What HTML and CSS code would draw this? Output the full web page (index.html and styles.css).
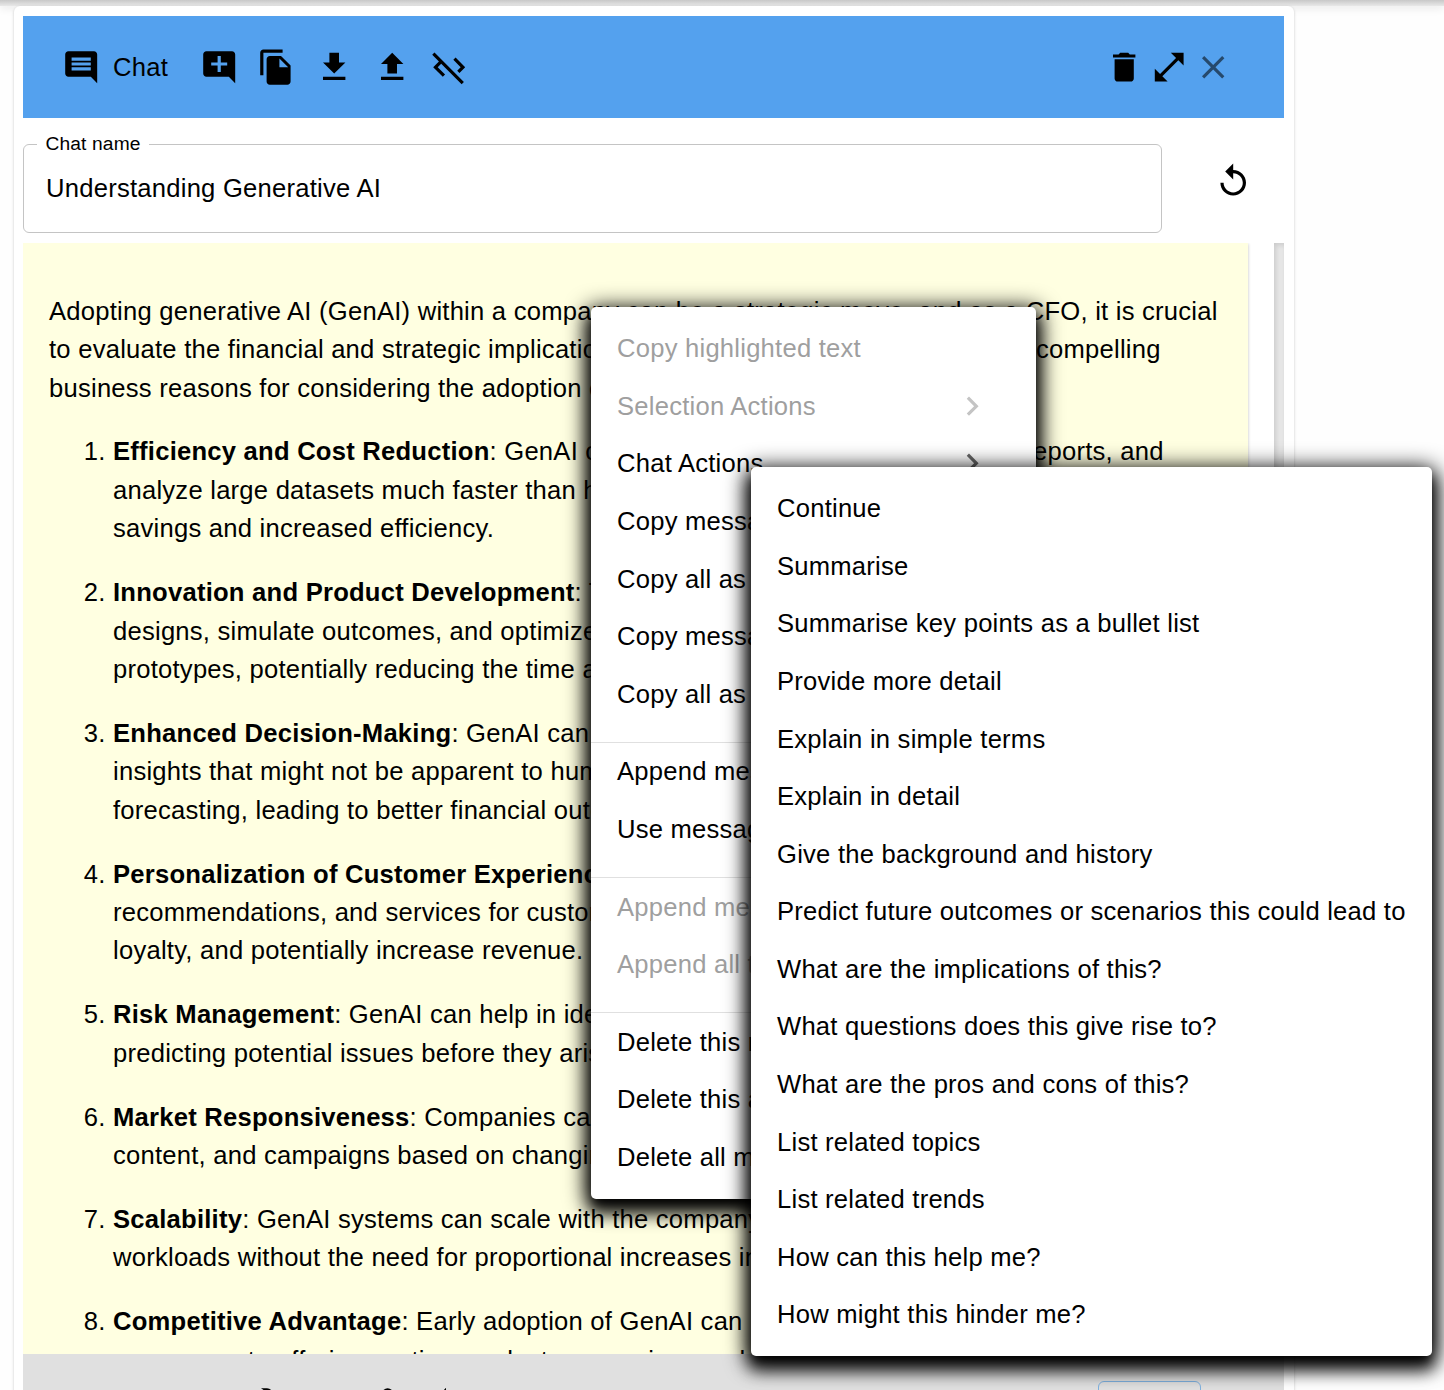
FILE: index.html
```
<!DOCTYPE html>
<html lang="en">
<head>
<meta charset="utf-8">
<title>Chat</title>
<link rel="stylesheet" href="styles.css">
</head>
<body>
<div class="app-bar"></div>
<main class="card">
  <header class="toolbar">
    <svg class="icon" viewBox="0 0 24 24"><path d="M21.99 4c0-1.1-.89-2-1.99-2H4c-1.1 0-2 .9-2 2v12c0 1.1.9 2 2 2h14l4 4-.01-18zM18 14H6v-2h12v2zm0-3H6V9h12v2zm0-3H6V6h12v2z"/></svg>
    <span class="title">Chat</span>
    <svg class="icon new" viewBox="0 0 24 24"><path d="M22 4c0-1.1-.9-2-2-2H4c-1.1 0-2 .9-2 2v12c0 1.1.9 2 2 2h14l4 4V4zm-5 7h-4v4h-2v-4H7V9h4V5h2v4h4v2z"/></svg>
    <svg class="icon copy" viewBox="0 0 24 24"><path d="M16 1H4c-1.1 0-2 .9-2 2v14h2V3h12V1zm-1 4 6 6v10c0 1.1-.9 2-2 2H7.99C6.89 23 6 22.1 6 21l.01-14c0-1.1.89-2 1.99-2h7zm-1 7h5.5L14 6.5V12z"/></svg>
    <svg class="icon down" viewBox="0 0 24 24"><path d="M19 9h-4V3H9v6H5l7 7 7-7zM5 18v2h14v-2H5z"/></svg>
    <svg class="icon up" viewBox="0 0 24 24"><path d="M5 20h14v-2H5v2zm0-10h4v6h6v-6h4l-7-7-7 7z"/></svg>
    <svg class="icon code" viewBox="0 0 24 24"><path d="m19.17 12-4.58-4.59L16 6l6 6-3.59 3.59L17 14.17 19.17 12zM1.39 4.22l4.19 4.19L2 12l6 6 1.41-1.41L4.83 12 7 9.83l12.78 12.78 1.41-1.41L2.81 2.81 1.39 4.22z"/></svg>
    <span class="grow"></span>
    <svg class="icon trash" viewBox="0 0 24 24"><path d="M6 19c0 1.1.9 2 2 2h8c1.1 0 2-.9 2-2V7H6v12zM19 4h-3.5l-1-1h-5l-1 1H5v2h14V4z"/></svg>
    <svg class="icon expand" viewBox="0 0 24 24"><path d="M21 11V3h-8l3.29 3.29-10 10L3 13v8h8l-3.29-3.29 10-10z"/></svg>
    <svg class="icon close" viewBox="0 0 24 24"><path d="M19 6.41 17.59 5 12 10.59 6.41 5 5 6.41 10.59 12 5 17.59 6.41 19 12 13.41 17.59 19 19 17.59 13.41 12z"/></svg>
  </header>

  <div class="name-row">
    <fieldset class="field"><legend>Chat name</legend><span>Understanding Generative AI</span></fieldset>
    <svg class="icon reset" viewBox="0 0 24 24"><path d="M12 5V1L7 6l5 5V7c3.31 0 6 2.69 6 6s-2.69 6-6 6-6-2.69-6-6H4c0 4.42 3.58 8 8 8s8-3.58 8-8-3.58-8-8-8z"/></svg>
  </div>

  <div class="scroller">
    <article class="message">
      <p>Adopting generative AI (GenAI) within a company can be a strategic move, and as a CFO, it is crucial<br>to evaluate the financial and strategic implications <span class="end" style="--x:1013px">compelling</span><br>business reasons for considering the adoption of</p>
      <ol>
        <li><b>Efficiency and Cost Reduction</b>: GenAI can <span class="end" style="--x:1010px">eports, and</span><br>analyze large datasets much faster than hu<br>savings and increased efficiency.</li>
        <li><b>Innovation and Product Development</b>: The<br>designs, simulate outcomes, and optimize<br>prototypes, potentially reducing the time and</li>
        <li><b>Enhanced Decision-Making</b>: GenAI can<br>insights that might not be apparent to human<br>forecasting, leading to better financial outcomes</li>
        <li><b>Personalization of Customer Experience</b><br>recommendations, and services for customers<br>loyalty, and potentially increase revenue.</li>
        <li><b>Risk Management</b>: GenAI can help in identify<br>predicting potential issues before they arise.</li>
        <li><b>Market Responsiveness</b>: Companies can<br>content, and campaigns based on changing</li>
        <li><b>Scalability</b>: GenAI systems can scale with the company<br>workloads without the need for proportional increases in</li>
        <li><b>Competitive Advantage</b>: Early adoption of GenAI can<br>ease move to offering section products or services and</li>
      </ol>
    </article>
    <div class="track"></div>
  </div>

  <footer class="composer">
    <svg class="tools" viewBox="0 0 200 20"><path d="M1 1.200H7Q10 1.200 12 4H5zM121.500 5Q127.500-2.500 134 5zM183 4l3-3.200V4z"/></svg>
    <span class="send"></span>
  </footer>
</main>

<ul class="menu main-menu">
  <li class="off">Copy highlighted text</li>
  <li class="off">Selection Actions<svg class="chevron" viewBox="0 0 24 24"><path d="M10 6 8.59 7.41 13.17 12l-4.58 4.59L10 18l6-6z"/></svg></li>
  <li>Chat Actions<svg class="chevron" viewBox="0 0 24 24"><path d="M10 6 8.59 7.41 13.17 12l-4.58 4.59L10 18l6-6z"/></svg></li>
  <li>Copy message</li>
  <li>Copy all as</li>
  <li>Copy message</li>
  <li>Copy all as</li>
  <li class="divider"></li>
  <li>Append message</li>
  <li>Use message</li>
  <li class="divider"></li>
  <li class="off">Append message</li>
  <li class="off">Append all to</li>
  <li class="divider"></li>
  <li>Delete this message</li>
  <li>Delete this and</li>
  <li>Delete all messages</li>
</ul>

<ul class="menu sub-menu">
  <li>Continue</li>
  <li>Summarise</li>
  <li>Summarise key points as a bullet list</li>
  <li>Provide more detail</li>
  <li>Explain in simple terms</li>
  <li>Explain in detail</li>
  <li>Give the background and history</li>
  <li>Predict future outcomes or scenarios this could lead to</li>
  <li>What are the implications of this?</li>
  <li>What questions does this give rise to?</li>
  <li>What are the pros and cons of this?</li>
  <li>List related topics</li>
  <li>List related trends</li>
  <li>How can this help me?</li>
  <li>How might this hinder me?</li>
</ul>
</body>
</html>
```
FILE: styles.css
```
* { box-sizing: border-box; }
html, body { height: 1390px; }
body {
  margin: 0;
  position: relative;
  overflow: hidden;
  background: #fefefe;
  color: #000;
  font: 25.6px/38.4px "Liberation Sans", Arial, sans-serif;
  letter-spacing: 0.24px;
}
.app-bar {
  height: 6px;
  background: linear-gradient(#c8c8c8, #e8e8e8);
  box-shadow: 0 2px 8px rgba(0, 0, 0, .1);
}
.card {
  position: relative;
  display: flex;
  flex-direction: column;
  width: 1280px;
  height: 1400px;
  margin-left: 14px;
  padding: 10px 10px 0 9px;
  background: #fff;
  border-radius: 6px 6px 0 0;
  box-shadow: 0 1px 3px rgba(0, 0, 0, .22);
}
.icon { width: 38.4px; height: 38.4px; flex: none; fill: currentColor; }
.toolbar {
  display: flex;
  align-items: center;
  flex: none;
  height: 102px;
  padding: 0 51.6px 0 38.8px;
  background: #54a1ee;
}
.title { margin-left: 12.8px; }
.new { margin-left: 32px; }
.copy { margin-left: 18.6px; }
.down { margin-left: 19.8px; }
.up { margin-left: 19.6px; }
.code { margin-left: 18.4px; margin-top: 1px; }
.grow { flex: 1; }
.expand { margin-left: 6.4px; }
.close { margin-left: 5.6px; opacity: .54; }
.name-row { display: flex; flex: none; height: 125px; padding-top: 16px; }
.field {
  width: 1139px;
  height: 99px;
  margin: 0;
  padding: 15px 22px 0;
  border: 1px solid #c4c4c4;
  border-radius: 6px;
}
.field legend {
  margin-left: -9px;
  padding: 0 8.4px;
  font-size: 19.2px;
  line-height: 20px;
  letter-spacing: .15px;
}
.field span { display: block; }
.reset { margin: 27.5px 0 0 52px; }
.scroller {
  display: flex;
  flex: none;
  justify-content: space-between;
  height: 1111px;
  overflow: hidden;
}
.message {
  position: relative;
  width: 1225px;
  height: 1200px;
  padding: 48.9px 0 0 26px;
  background: #ffffe1;
  box-shadow: 0 1px 3px rgba(0, 0, 0, .25);
  letter-spacing: .235px;
  white-space: nowrap;
}
.message p { margin: 0 0 25.3px; }
.message ol { margin: 0; padding-left: 64px; }
.message li { margin-bottom: 25.5px; }
.end { position: absolute; left: var(--x); }
.track {
  width: 10px;
  background: #e7e7e7;
  box-shadow: inset 2px 2px 5px rgba(0, 0, 0, .12);
}
.composer {
  display: flex;
  flex: none;
  justify-content: space-between;
  height: 60px;
  padding: 26px 83px 0 237px;
  background: #e0e0e0;
}
.tools { width: 200px; height: 20px; margin-top: 7px; }
.send {
  width: 103px;
  height: 50px;
  margin-top: 1px;
  border: 1px solid #7fb2e0;
  border-radius: 6px;
}
.menu {
  position: absolute;
  margin: 0;
  padding: 12.7px 0;
  list-style: none;
  background: #fff;
  border-radius: 5px;
  letter-spacing: .23px;
  white-space: nowrap;
  overflow: hidden;
  box-shadow: 0 8px 8px -4.8px rgba(0, 0, 0, .8), 0 12.8px 16px 1.6px rgba(0, 0, 0, .65), 0 4.8px 22.4px 3.2px #000;
}
.menu li {
  display: flex;
  align-items: center;
  justify-content: space-between;
  height: 57.59px;
  padding: 0 26px;
}
.menu li.off { color: #9f9f9f; }
.menu li.divider { height: 1px; margin-top: 19.1px; padding: 0; background: #e0e0e0; }
.main-menu { left: 591px; top: 307px; width: 445px; height: 892px; }
.sub-menu { left: 751px; top: 467px; width: 681px; height: 889px; }
.chevron { width: 38.4px; height: 38.4px; margin-right: 19px; fill: #666; }
.off .chevron { fill: #c4c4c4; }
```
